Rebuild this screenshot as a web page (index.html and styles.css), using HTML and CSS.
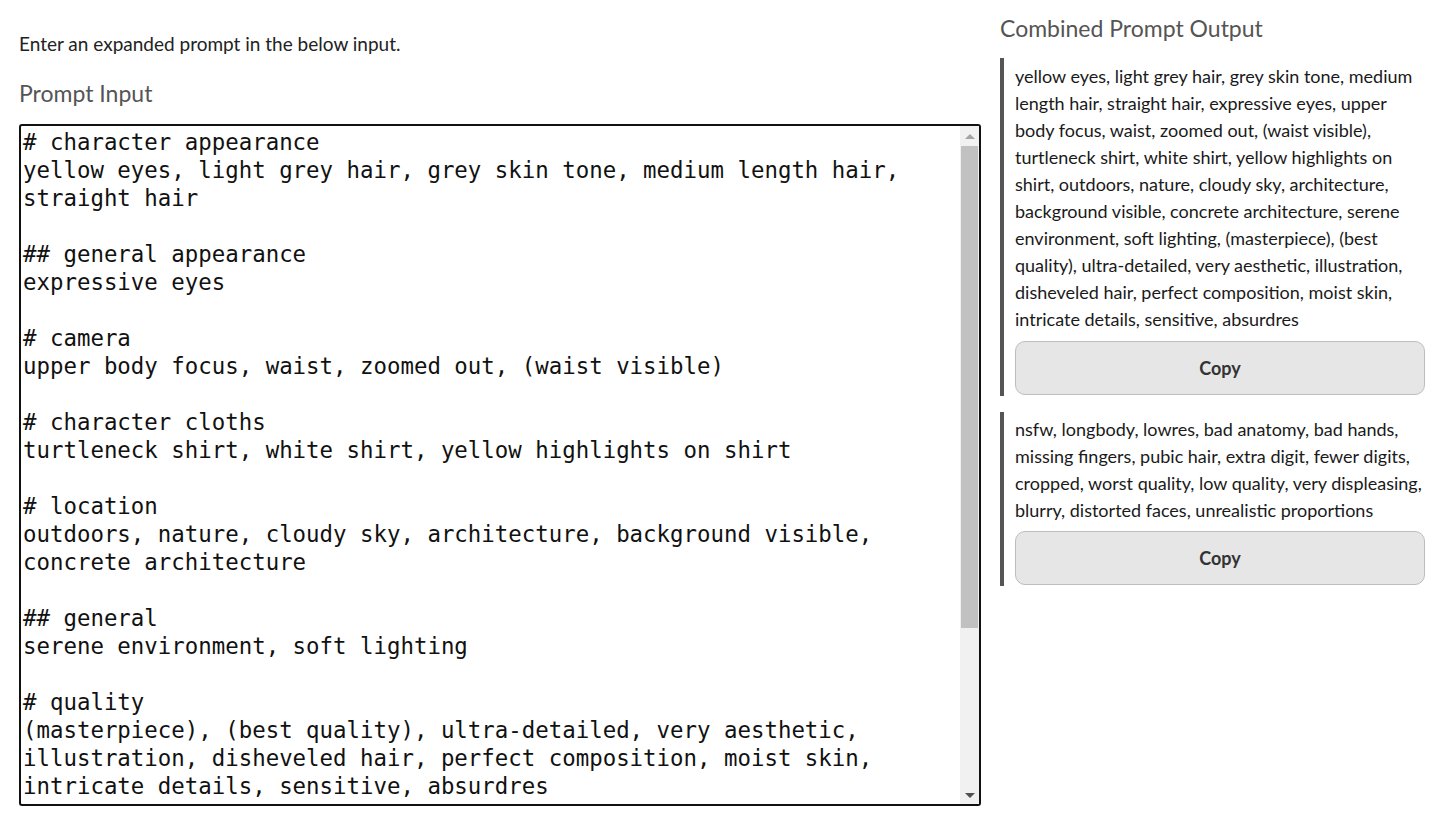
FILE: index.html
```html
<!DOCTYPE html>
<html lang="en">
<head>
<meta charset="utf-8">
<title>Prompt Expander</title>
<link rel="stylesheet" href="styles.css">
</head>
<body>
<div class="app">
  <section class="left">
    <p class="intro">Enter an expanded prompt in the below input.</p>
    <h2 class="heading">Prompt Input</h2>
    <div class="prompt-wrap">
      <textarea class="prompt" spellcheck="false"># character appearance
yellow eyes, light grey hair, grey skin tone, medium length hair, straight hair

## general appearance
expressive eyes

# camera
upper body focus, waist, zoomed out, (waist visible)

# character cloths
turtleneck shirt, white shirt, yellow highlights on shirt

# location
outdoors, nature, cloudy sky, architecture, background visible, concrete architecture

## general
serene environment, soft lighting

# quality
(masterpiece), (best quality), ultra-detailed, very aesthetic, illustration, disheveled hair, perfect composition, moist skin, intricate details, sensitive, absurdres

# negative
nsfw, longbody, lowres, bad anatomy, bad hands, missing fingers, pubic hair, extra digit, fewer digits, cropped, worst quality, low quality, very displeasing, blurry, distorted faces, unrealistic proportions
</textarea>
      <div class="scrollbar" aria-hidden="true">
        <div class="sb-btn sb-up"><span class="tri tri-up"></span></div>
        <div class="sb-track"><div class="sb-thumb"></div></div>
        <div class="sb-btn sb-down"><span class="tri tri-down"></span></div>
      </div>
    </div>
  </section>
  <section class="right">
    <h2 class="heading heading-out">Combined Prompt Output</h2>
    <div class="output">
      <p class="output-text">yellow eyes, light grey hair, grey skin tone, medium length hair, straight hair, expressive eyes, upper body focus, waist, zoomed out, (waist visible), turtleneck shirt, white shirt, yellow highlights on shirt, outdoors, nature, cloudy sky, architecture, background visible, concrete architecture, serene environment, soft lighting, (masterpiece), (best quality), ultra-detailed, very aesthetic, illustration, disheveled hair, perfect composition, moist skin, intricate details, sensitive, absurdres</p>
      <button class="copy" type="button">Copy</button>
    </div>
    <div class="output output-neg">
      <p class="output-text">nsfw, longbody, lowres, bad anatomy, bad hands, missing fingers, pubic hair, extra digit, fewer digits, cropped, worst quality, low quality, very displeasing, blurry, distorted faces, unrealistic proportions</p>
      <button class="copy copy-neg" type="button">Copy</button>
    </div>
  </section>
</div>
</body>
</html>
```
FILE: styles.css
```css
html, body {
  margin: 0;
  padding: 0;
  background: #ffffff;
}

body {
  font-family: "Lato", "Noto Sans", sans-serif;
  color: #1f1f1f;
}

.app {
  display: grid;
  grid-template-columns: 962px 425px;
  column-gap: 19px;
  padding: 0 8px 0 19px;
}

.left {
  display: flex;
  flex-direction: column;
  padding-top: 30px;
}

.intro {
  margin: 0;
  font-size: 19px;
  line-height: 27px;
  color: #222;
}

.heading {
  margin: 0;
  font-weight: 400;
  color: #555;
  font-size: 23px;
  line-height: 30px;
}

.left .heading {
  margin-top: 21px;
}

.prompt-wrap {
  position: relative;
  margin-top: 16px;
  width: 962px;
  height: 682px;
}

.prompt {
  display: block;
  box-sizing: border-box;
  width: 100%;
  height: 100%;
  border: 2px solid #111;
  border-radius: 3px;
  padding: 2px 22px 2px 2px;
  font-family: "DejaVu Sans Mono", "Liberation Mono", monospace;
  font-size: 22.4px;
  line-height: 28px;
  color: #111;
  resize: none;
  overflow: hidden;
  outline: none;
  background: #fff;
}

.scrollbar {
  position: absolute;
  top: 2px;
  right: 2px;
  bottom: 2px;
  width: 19px;
  background: #f1f1f1;
  display: flex;
  flex-direction: column;
}

.sb-btn {
  height: 20px;
  display: flex;
  align-items: center;
  justify-content: center;
}

.sb-down {
  height: 18px;
}

.tri {
  width: 0;
  height: 0;
  border-left: 5px solid transparent;
  border-right: 5px solid transparent;
}

.tri-up {
  border-bottom: 5px solid #a3a3a3;
}

.tri-down {
  border-top: 5px solid #505050;
}

.sb-track {
  flex: 1;
  padding: 0 1px;
}

.sb-thumb {
  height: 482px;
  background: #c1c1c1;
}

.right {
  display: flex;
  flex-direction: column;
  padding-top: 13px;
}

.heading-out {
  margin-bottom: 15px;
}

.output {
  border-left: 4px solid #555;
  padding: 5px 0 1px 11px;
  display: flex;
  flex-direction: column;
}

.output-neg {
  margin-top: 16px;
  padding-top: 4px;
}

.output-text {
  margin: 0;
  font-size: 18px;
  line-height: 27px;
  color: #1a1a1a;
}

.copy {
  margin-top: 8px;
  height: 54px;
  width: 100%;
  box-sizing: border-box;
  background: #e6e6e6;
  border: 1px solid #bdbdbd;
  border-radius: 10px;
  font-family: inherit;
  font-size: 18px;
  font-weight: 700;
  color: #333;
  cursor: pointer;
}

.copy-neg {
  margin-top: 7px;
}
```
